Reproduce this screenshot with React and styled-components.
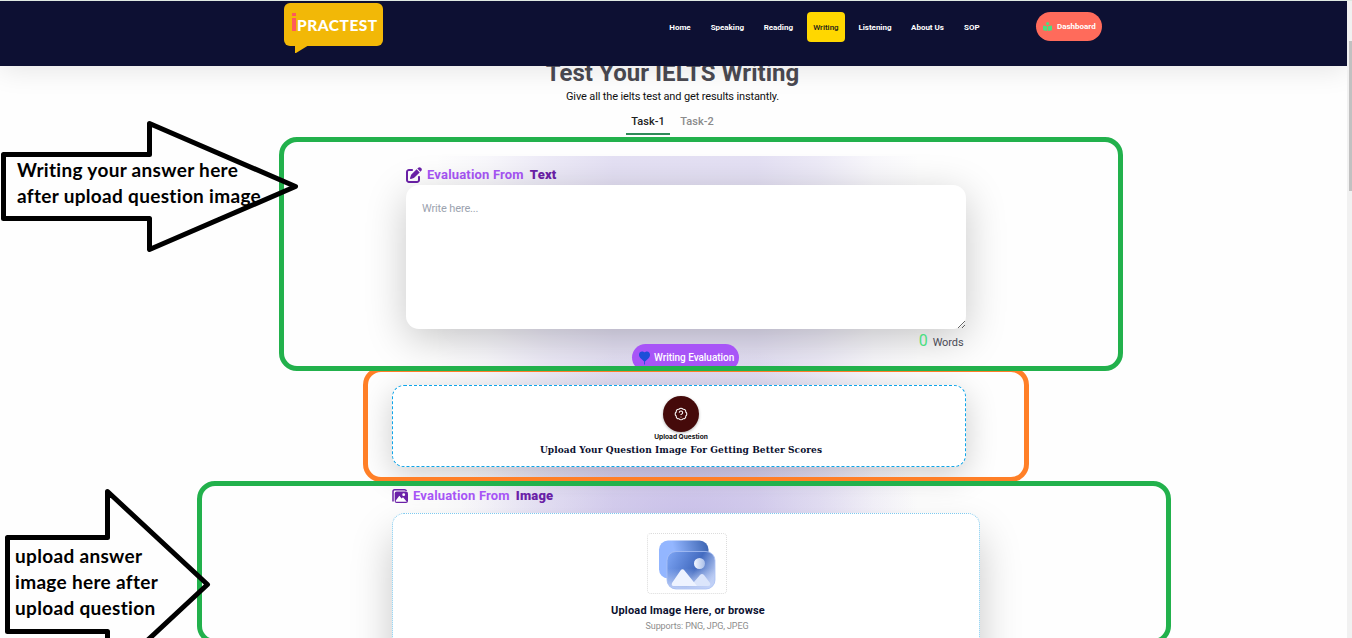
import React from "react";
import styled, { createGlobalStyle } from "styled-components";
import { FaPenToSquare } from "react-icons/fa6";
import { BadgeQuestionMark } from "lucide-react";

const Global = createGlobalStyle`
  * { box-sizing: border-box; }
  body { margin: 0; background: #fff; font-family: Roboto, sans-serif; overflow: hidden; }
  h1, h2, p { margin: 0; }
  button { font: inherit; border: 0; }
`;

const Screen = styled.div`
  position: relative;
  display: grid;
  grid-template-columns: 1347px 5px;
  width: 1352px;
  height: 638px;
  overflow: hidden;
  background: #fefefe;
`;
const Page = styled.div`
  height: 638px;
  overflow: hidden;
`;
const Scrollbar = styled.div`
  background: #f1f1f1;
  border-top: 1px solid #dfe9e2;
  padding: 40px 0 0 2px;
`;
const Thumb = styled.div`
  height: 150px;
  background: #c1c1c1;
`;

const Header = styled.header`
  position: relative;
  z-index: 2;
  display: flex;
  align-items: flex-start;
  height: 66px;
  padding-left: 284px;
  background: #0d1033;
  border-top: 1px solid #dfe9e2;
  box-shadow: 0 4px 28px rgba(0, 0, 0, 0.1);
`;
const Logo = styled.div`
  position: relative;
  display: flex;
  width: 99px;
  height: 43px;
  margin: 2px 280px 0 0;
  padding-left: 8px;
  border-radius: 6px;
  background: #f2b807;
  color: #fff;
  svg { position: absolute; left: 11px; top: 42px; }
`;
const LogoMark = styled.span`
  width: 4px;
  height: 18px;
  margin: 10px 1px 0 0;
  background: linear-gradient(#ff5a5a 0 3px, transparent 3px 5px, #ff5a5a 5px);
`;
const LogoText = styled.span`
  font: 900 15.5px/44px Lato, sans-serif;
  letter-spacing: 0.5px;
`;
const Nav = styled.nav`
  display: flex;
  align-items: center;
  gap: 7.8px;
  margin-top: 11px;
  width: 373px;
`;
const NavItem = styled.a`
  flex: none;
  width: ${(p) => p.$w}px;
  height: 30px;
  border-radius: 4px;
  text-align: center;
  white-space: nowrap;
  font-size: 8px;
  line-height: 31px;
  letter-spacing: ${(p) => (p.$active ? 0 : -0.02)}px;
  font-weight: ${(p) => (p.$active ? 500 : 700)};
  color: ${(p) => (p.$active ? "#1a1a1a" : "#fff")};
  background: ${(p) => (p.$active ? "#ffd700" : "none")};
`;
const Dashboard = styled.button`
  display: flex;
  align-items: center;
  gap: 5px;
  width: 66px;
  height: 29px;
  margin-top: 11px;
  padding: 0 0 0 7px;
  border-radius: 15px;
  background: #ff6b5b;
  color: #fff;
  font-size: 8px;
  font-weight: 700;
  letter-spacing: 0;
`;

const Main = styled.main`
  display: flex;
  flex-direction: column;
  margin-top: -10px;
`;
const Intro = styled.section`
  display: flex;
  flex-direction: column;
  align-items: center;
  height: 100px;
  padding: 1px 2px 0 0;
`;
const Title = styled.h1`
  font-size: 24px;
  line-height: 32px;
  font-weight: 700;
  letter-spacing: 0.04px;
  color: #4b4a52;
`;
const Subtitle = styled.p`
  font-size: 11px;
  line-height: 15px;
  letter-spacing: -0.14px;
  color: #111;
`;
const Tabs = styled.div`
  display: flex;
  gap: 5px;
  margin: 4px 0 0 0;
`;
const Tab = styled.div`
  width: 44px;
  height: 27px;
  text-align: center;
  font-size: 11px;
  line-height: 27px;
  font-weight: 500;
  color: ${(p) => (p.$active ? "#222" : "#8b8b8b")};
  border-bottom: 2px solid ${(p) => (p.$active ? "#2e8b57" : "transparent")};
`;

const Evaluation = styled.section`
  position: relative;
  display: flex;
  flex-direction: column;
  height: 482px;
  padding: 10px 0 0 392px;
  isolation: isolate;
  &::before {
    content: "";
    position: absolute;
    z-index: -1;
    inset: 0 417px 0 420px;
    background:
      radial-gradient(ellipse 230px 190px at 268px 375px, rgba(158, 138, 222, 0.34), rgba(158, 138, 222, 0.15) 50%, transparent),
      linear-gradient(90deg, transparent 3%, rgba(168,155,220,.06) 13%, rgba(168,155,220,.2) 25%, rgba(168,155,220,.3) 38%, rgba(168,155,220,.3) 66%, rgba(168,155,220,.2) 78%, rgba(168,155,220,.06) 89%, transparent 98%);
  }
`;
const SectionTitle = styled.h2`
  flex: none;
  display: flex;
  align-items: center;
  gap: 6px;
  height: ${(p) => p.$h}px;
  margin-left: ${(p) => p.$indent || 0}px;
  padding-bottom: ${(p) => p.$lift || 0}px;
  font-size: 13px;
  line-height: 17px;
  font-weight: 700;
  letter-spacing: 0.18px;
  color: #a855f7;
  strong { color: #6b21a8; }
  svg { flex: none; color: #6b21a8; margin-right: -1px; }
`;
const Answer = styled.textarea`
  flex: none;
  display: block;
  width: 560px;
  height: 144px;
  margin-left: 14px;
  padding: 16px;
  border: 0;
  border-radius: 13px;
  background: #fff;
  box-shadow: 0 10px 40px rgba(0, 0, 0, 0.22);
  font: 400 11px/15px Roboto, sans-serif;
  letter-spacing: -0.15px;
  resize: both;
  &::placeholder { color: #9ca3af; }
`;
const Counter = styled.div`
  flex: none;
  display: flex;
  align-items: center;
  justify-content: flex-end;
  gap: 5px;
  width: 571.5px;
  height: 24px;
  padding-top: 3px;
  font-size: 11px;
  line-height: 24px;
  letter-spacing: -0.1px;
  color: #4b4b55;
  b { font: 400 16px/22px Roboto, sans-serif; color: #4ade80; margin-top: -4px; }
`;
const Evaluate = styled.button`
  display: flex;
  align-items: center;
  gap: 4px;
  flex: none;
  width: 107px;
  height: 27px;
  margin: -9px 0 0 240px;
  padding: 0 0 0 7px;
  border-radius: 14px;
  background: #a855f7;
  color: #fff;
  font-size: 10px;
  font-weight: 500;
  white-space: nowrap;
  letter-spacing: -0.03px;
`;
const Question = styled.div`
  flex: none;
  display: flex;
  flex-direction: column;
  align-items: center;
  width: 574px;
  height: 82px;
  margin-top: 14px;
  padding: 10px 0 0 4px;
  border: 1px dashed #0ea5e9;
  border-radius: 12px;
  background: #fff;
  box-shadow: 0 8px 32px rgba(0, 0, 0, 0.2);
`;
const Round = styled.div`
  display: grid;
  place-items: center;
  width: 36px;
  height: 36px;
  border-radius: 50%;
  background: #450a0a;
  color: #fff;
  box-shadow: 0 1px 3px rgba(0, 0, 0, 0.3);
`;
const Caption = styled.p`
  margin-top: 1px;
  font: 700 6.6px/9px Inter, sans-serif;
  color: #111;
`;
const Prompt = styled.p`
  font: 700 10px/16px "DejaVu Serif", serif;
  font-stretch: condensed;
  letter-spacing: 0.09px;
  color: #0b1030;
  white-space: nowrap;
`;
const Divider = styled.div`
  flex: none;
  width: 588px;
  height: 1px;
  margin-top: 10px;
  background: #6b21a8;
`;
const Drop = styled.div`
  flex: none;
  display: flex;
  flex-direction: column;
  align-items: center;
  width: 588px;
  height: 160px;
  padding: 19px 0 0 4px;
  border: 1px dotted #7dc9ef;
  border-radius: 12px;
  background: #fff;
  box-shadow: 0 22px 42px rgba(0, 0, 0, 0.22);
`;
const Thumbnail = styled.div`
  width: 80px;
  height: 61px;
  margin-right: 2px;
  border: 1px dotted #dcdcdc;
  border-radius: 4px;
`;
const DropTitle = styled.p`
  margin-top: 8px;
  font-size: 11px;
  line-height: 17px;
  font-weight: 700;
  letter-spacing: 0.18px;
  color: #0b1030;
`;
const Supports = styled.p`
  margin-left: 18px;
  font-size: 9px;
  line-height: 15px;
  letter-spacing: -0.12px;
  color: #8d8d8d;
`;

const Outline = styled.div`
  position: absolute;
  z-index: 4;
  left: ${(p) => p.$x}px;
  top: ${(p) => p.$y}px;
  width: ${(p) => p.$w}px;
  height: ${(p) => p.$h}px;
  border: 5px solid ${(p) => p.$color};
  border-radius: 18px;
  pointer-events: none;
`;
const Arrows = styled.svg`
  position: absolute;
  z-index: 5;
  inset: 0;
  pointer-events: none;
`;
const Note = styled.div`
  position: absolute;
  z-index: 6;
  left: ${(p) => p.$x}px;
  top: ${(p) => p.$y}px;
  font: 700 19px/26px Lato, sans-serif;
  letter-spacing: 0.32px;
  font-variant-ligatures: none;
  color: #000;
  white-space: nowrap;
`;

const nav = [["Home", 34], ["Speaking", 45], ["Reading", 41.5], ["Writing", 38], ["Listening", 44.5], ["About Us", 45], ["SOP", 28]];

const Reader = () => (
  <svg width="9" height="9" viewBox="0 0 9 9" fill="#4ade80">
    <circle cx="4.6" cy="1.6" r="1.6" />
    <path d="M0 3.4 4.2 4.2V9L0 8.2zM9 3.4 4.9 4.2V9L9 8.2z" />
  </svg>
);
const Balloon = () => (
  <svg width="11" height="14" viewBox="0 0 11 14" fill="#1d4ed8">
    <path d="M0 3.7C0 1.2 2 0 3.8.5 4.8.8 5.1 1.2 5.5 1.2S6.5.7 7.3.5C9.2 0 11 1.3 11 3.7 11 7 7.5 8.8 6 10.6v3H5.2v-3C4 8.8 0 7 0 3.7z" />
  </svg>
);
const Pictures = () => (
  <svg width="16" height="14" viewBox="0 0 16 14">
    <path d="M1 12.5V2.5Q1 .8 2.6.8H12.5Q14 .8 14.5 2" fill="none" stroke="#6b21a8" strokeWidth="1.5" />
    <rect x="2.7" y="2.6" width="13.3" height="11.4" rx="2" fill="#6b21a8" />
    <circle cx="11.7" cy="5.7" r="1.4" fill="#fff" />
    <path d="M3.8 11.5 7.3 6.7 9.6 9.6 11 8.3 14.8 12.7H3.8z" fill="#fff" />
  </svg>
);
const Photo = () => (
  <svg width="78" height="59" viewBox="648 534 78 59">
    <defs>
      <linearGradient id="back" x1="0" x2="1" y1=".3" y2=".1">
        <stop offset=".3" stopColor="#93b6ff" /><stop offset="1" stopColor="#3c64b1" />
      </linearGradient>
      <linearGradient id="front" x1="0" x2="1" y1=".2" y2=".6">
        <stop offset="0" stopColor="#78a0f0" /><stop offset=".6" stopColor="#436bc0" /><stop offset="1" stopColor="#b6c8f1" />
      </linearGradient>
      <linearGradient id="haze" x1="0" x2="0" y1="0" y2="1">
        <stop offset=".45" stopColor="#c4d3f8" stopOpacity="0" /><stop offset="1" stopColor="#c4d3f8" stopOpacity=".95" />
      </linearGradient>
      <linearGradient id="sun"><stop stopColor="#f2f6ff" /><stop offset="1" stopColor="#aabfe9" /></linearGradient>
    </defs>
    <rect x="659" y="540.5" width="49.5" height="38" rx="9" fill="url(#back)" />
    <rect x="667" y="551.5" width="48" height="37.5" rx="9" fill="url(#front)" />
    <rect x="667" y="551.5" width="48" height="37.5" rx="9" fill="url(#haze)" stroke="#a9c0f4" strokeWidth=".8" />
    <circle cx="699.5" cy="563.5" r="5.5" fill="url(#sun)" />
    <path d="M694 582 700 575Q702 573 704 575L710 583Q711 586 708 586H690z" fill="#dbe5fb" />
    <path d="M672 583 680.5 570.5Q682.5 568 684.5 570.5L697 586H673.5Q671 586 672 583z" fill="#eef3ff" />
  </svg>
);

export default function App() {
  return (
    <Screen>
      <Global />
      <Page>
        <Header>
          <Logo>
            <LogoMark />
            <LogoText>PRACTEST</LogoText>
            <svg width="14" height="8" viewBox="0 0 14 8"><path d="M0 0H14L1 8H0z" fill="#f2b807" /></svg>
          </Logo>
          <Nav>
            {nav.map(([label, w]) => (
              <NavItem key={label} $w={w} $active={label === "Writing"}>{label}</NavItem>
            ))}
          </Nav>
          <Dashboard><Reader />Dashboard</Dashboard>
        </Header>
        <Main>
          <Intro>
            <Title>Test Your IELTS Writing</Title>
            <Subtitle>Give all the ielts test and get results instantly.</Subtitle>
            <Tabs>
              <Tab $active>Task-1</Tab>
              <Tab>Task-2</Tab>
            </Tabs>
          </Intro>
          <Evaluation>
            <SectionTitle $h={19} $indent={14} $lift={2}>
              <FaPenToSquare size={16} />
              <span>Evaluation From</span><strong>Text</strong>
            </SectionTitle>
            <Answer placeholder="Write here..." />
            <Counter><b>0</b>Words</Counter>
            <Evaluate><Balloon />Writing Evaluation</Evaluate>
            <Question>
              <Round><BadgeQuestionMark size={14} strokeWidth={1.8} /></Round>
              <Caption>Upload Question</Caption>
              <Prompt>Upload Your Question Image For Getting Better Scores</Prompt>
            </Question>
            <Divider />
            <SectionTitle $h={35}>
              <Pictures />
              <span>Evaluation From</span><strong>Image</strong>
            </SectionTitle>
            <Drop>
              <Thumbnail><Photo /></Thumbnail>
              <DropTitle>Upload Image Here, or browse</DropTitle>
              <Supports>Supports: PNG, JPG, JPEG</Supports>
            </Drop>
          </Evaluation>
        </Main>
      </Page>
      <Scrollbar><Thumb /></Scrollbar>
      <Outline $x={363} $y={367} $w={666} $h={115} $color="#ff7f27" />
      <Outline $x={279} $y={137} $w={844} $h={234} $color="#22b14c" />
      <Outline $x={197} $y={481} $w={974} $h={163} $color="#22b14c" />
      <Arrows width="1352" height="638" fill="none" stroke="#000" strokeWidth="5" strokeLinejoin="round">
        <path d="M3.5 154.5H149.5V123.5L295.5 186.5 149.5 249.5V218.5H3.5z" />
        <path d="M7.5 537.5H107.5V491.5L207.5 584.5 107.5 677.5V631.5H7.5z" />
      </Arrows>
      <Note $x={17} $y={157}>Writing your answer here<br />after upload question image</Note>
      <Note $x={15} $y={543}>upload answer<br />image here after<br />upload question</Note>
    </Screen>
  );
}
